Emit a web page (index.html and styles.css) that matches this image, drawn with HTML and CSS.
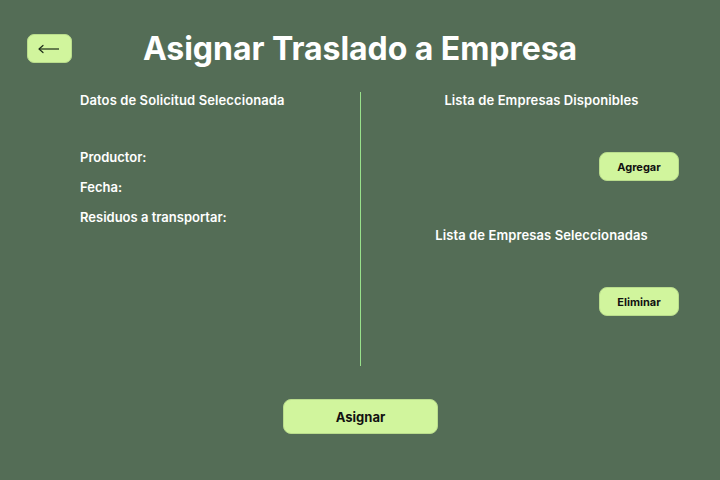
FILE: index.html
```html
<!DOCTYPE html>
<html lang="es">
<head>
<meta charset="utf-8">
<title>Asignar Traslado a Empresa</title>
<link rel="stylesheet" href="styles.css">
</head>
<body>
<div class="page">
  <header class="header">
    <button class="back-btn" aria-label="Volver">
      <svg width="22" height="10" viewBox="0 0 22 10" aria-hidden="true">
        <path d="M1 5H21" stroke="#1d2a1a" stroke-width="1.2" fill="none"/>
        <path d="M5 1.5L1 5L5 8.5" stroke="#1d2a1a" stroke-width="1.2" fill="none" stroke-linecap="round" stroke-linejoin="round"/>
      </svg>
    </button>
    <h1 class="title">Asignar Traslado a Empresa</h1>
    <div class="spacer"></div>
  </header>

  <main class="main">
    <section class="col col-left">
      <h2 class="heading">Datos de Solicitud Seleccionada</h2>
      <ul class="fields">
        <li>Productor:</li>
        <li>Fecha:</li>
        <li>Residuos a transportar:</li>
      </ul>
    </section>
    <div class="divider"></div>
    <section class="col col-right">
      <h2 class="heading center">Lista de Empresas Disponibles</h2>
      <button class="small-btn btn-add">Agregar</button>
      <h2 class="heading center">Lista de Empresas Seleccionadas</h2>
      <button class="small-btn btn-remove">Eliminar</button>
    </section>
  </main>

  <footer class="footer">
    <button class="main-btn">Asignar</button>
  </footer>
</div>
</body>
</html>
```

FILE: styles.css
```css
* { box-sizing: border-box; }
html, body {
  margin: 0;
  padding: 0;
  background: #546d56;
}
body {
  font-family: Inter, "Noto Sans", sans-serif;
  color: #ffffff;
  width: 720px;
  height: 480px;
  overflow: hidden;
}
.page {
  display: flex;
  flex-direction: column;
  padding-top: 29px;
}
.header {
  display: grid;
  grid-template-columns: 1fr auto 1fr;
  align-items: center;
  height: 39px;
}
.back-btn {
  justify-self: start;
  margin-left: 27px;
  width: 45px;
  height: 29px;
  border-radius: 7px;
  border: 1px solid #b9dc8c;
  background: #d1f59d;
  display: flex;
  align-items: center;
  justify-content: center;
  padding: 0;
  padding-right: 2px;
}
.title {
  margin: 0;
  font-size: 32px;
  font-weight: 700;
  line-height: 39px;
  letter-spacing: -0.05px;
  color: #ffffff;
}
.main {
  display: flex;
  margin-top: 24px;
  height: 274px;
}
.col {
  display: flex;
  flex-direction: column;
}
.col-left {
  width: 360px;
  padding-left: 80px;
}
.col-right {
  flex: 1;
  padding: 0 41px 0 43px;
  align-items: center;
}
.divider {
  width: 1px;
  background: #98e08a;
}
.heading {
  margin: 0;
  font-size: 13px;
  font-weight: 600;
  line-height: 16px;
  letter-spacing: 0.1px;
  color: #ffffff;
}
.fields {
  list-style: none;
  margin: 41px 0 0;
  padding: 0;
  display: flex;
  flex-direction: column;
  gap: 14px;
  font-size: 13px;
  font-weight: 600;
  line-height: 16px;
}
.small-btn {
  align-self: flex-end;
  width: 80px;
  height: 29px;
  border-radius: 8px;
  border: 1px solid #b9dc8c;
  background: #d1f59d;
  font-family: Inter, "Noto Sans", sans-serif;
  font-size: 11px;
  font-weight: 700;
  color: #111;
  padding: 0;
}
.btn-add { margin: 44px 0 46px; }
.btn-remove { margin: 44px 0 0; }
.footer {
  display: flex;
  justify-content: center;
  margin-top: 33px;
}
.main-btn {
  width: 155px;
  height: 35px;
  border-radius: 8px;
  border: 1px solid #b9dc8c;
  background: #d1f59d;
  font-family: Inter, "Noto Sans", sans-serif;
  font-size: 13px;
  font-weight: 700;
  color: #111;
  padding: 0;
  margin-left: 1px;
}
```
